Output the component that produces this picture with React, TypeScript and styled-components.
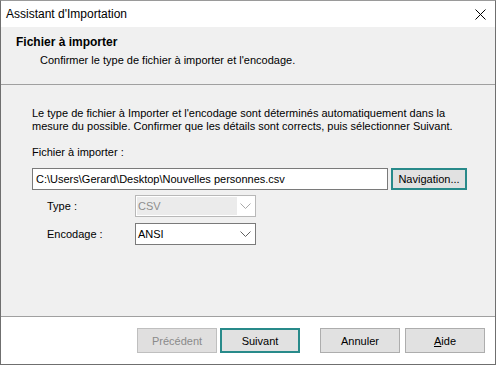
import styled, { createGlobalStyle } from "styled-components";

const GlobalStyle = createGlobalStyle`
  body {
    margin: 0;
    background: #ffffff;
    font-family: "Liberation Sans", Arial, sans-serif;
    font-size: 11px;
    color: #000000;
  }
`;

const Window = styled.div`
  width: 496px;
  height: 365px;
  box-sizing: border-box;
  border: 1px solid #6f6f6f;
  border-top-color: #9a9a9a;
  display: flex;
  flex-direction: column;
  background: #f0f0f0;
`;

const TitleBar = styled.div`
  height: 26px;
  flex: none;
  background: #ffffff;
  display: flex;
  align-items: center;
  justify-content: space-between;
  padding-left: 5px;
  padding-right: 9px;
  font-size: 12px;
`;

const Header = styled.div`
  height: 58px;
  flex: none;
  box-sizing: border-box;
  border-bottom: 1px solid #a0a0a0;
  padding: 8px 0 0 15px;
`;

const HeaderTitle = styled.div`
  font-weight: bold;
  font-size: 12px;
  line-height: 14px;
`;

const HeaderSub = styled.div`
  margin-top: 4px;
  padding-left: 24px;
  line-height: 14px;
`;

const Body = styled.div`
  flex: 1;
  padding: 22px 0 0 31px;
`;

const Text = styled.div`
  line-height: 13px;
  white-space: nowrap;
`;

const FieldLabel = styled(Text)<{ $top: number }>`
  margin-top: ${(p) => p.$top}px;
`;

const FileRow = styled.div`
  display: flex;
  gap: 3px;
  margin-top: 9px;
`;

const TextInput = styled.div`
  width: 356px;
  height: 22px;
  box-sizing: border-box;
  border: 1px solid #7a7a7a;
  background: #ffffff;
  display: flex;
  align-items: center;
  padding-left: 3px;
`;

const Button = styled.div<{ $focus?: boolean; $disabled?: boolean; $w?: number }>`
  width: ${(p) => p.$w ?? 80}px;
  height: ${(p) => (p.$w ? 22 : 25)}px;
  box-sizing: border-box;
  border: ${(p) => (p.$focus ? "2px solid #288a8a" : p.$disabled ? "1px solid #bfbfbf" : "1px solid #adadad")};
  background: ${(p) => (p.$disabled ? "#e0dfdf" : "#e1e1e1")};
  color: ${(p) => (p.$disabled ? "#8a8a8a" : "#000000")};
  display: flex;
  align-items: center;
  justify-content: center;
`;

const Grid = styled.div`
  display: grid;
  grid-template-columns: 88px 121px;
  row-gap: 6px;
  margin-top: 5px;
  padding-left: 15px;
  align-items: center;
`;

const Combo = styled.div<{ $disabled?: boolean }>`
  height: 22px;
  box-sizing: border-box;
  border: 1px solid ${(p) => (p.$disabled ? "#b8b8b8" : "#7a7a7a")};
  background: #ffffff;
  padding: 1px;
  display: flex;
  align-items: stretch;
  color: ${(p) => (p.$disabled ? "#8d8d8d" : "#000000")};
`;

const ComboValue = styled.div<{ $disabled?: boolean }>`
  flex: 1;
  background: ${(p) => (p.$disabled ? "#ebebeb" : "#ffffff")};
  display: flex;
  align-items: center;
  padding-left: 1px;
`;

const Chevron = styled.div`
  width: 17px;
  display: flex;
  align-items: center;
  justify-content: center;
`;

const Footer = styled.div`
  height: 48px;
  flex: none;
  box-sizing: border-box;
  border-top: 1px solid #a0a0a0;
  background: #ffffff;
  display: flex;
  justify-content: flex-end;
  align-items: flex-start;
  padding: 11px 10px 0 0;
`;

const Spacer = styled.div<{ $w: number }>`
  width: ${(p) => p.$w}px;
`;

const ChevronIcon = ({ color }: { color: string }) => (
  <svg width="11" height="6" viewBox="0 0 11 6">
    <path d="M0.5 0.5 L5.5 5.5 L10.5 0.5" fill="none" stroke={color} strokeWidth="1" />
  </svg>
);

export default function App() {
  return (
    <>
      <GlobalStyle />
      <Window>
        <TitleBar>
          <span>Assistant d'Importation</span>
          <svg width="11" height="11" viewBox="0 0 11 11">
            <path d="M0.5 0.5 L10.5 10.5 M10.5 0.5 L0.5 10.5" stroke="#000" strokeWidth="1" />
          </svg>
        </TitleBar>
        <Header>
          <HeaderTitle>Fichier à importer</HeaderTitle>
          <HeaderSub>Confirmer le type de fichier à importer et l'encodage.</HeaderSub>
        </Header>
        <Body>
          <Text>
            Le type de fichier à Importer et l'encodage sont déterminés automatiquement dans la
            <br />
            mesure du possible. Confirmer que les détails sont corrects, puis sélectionner Suivant.
          </Text>
          <FieldLabel $top={13}>Fichier à importer :</FieldLabel>
          <FileRow>
            <TextInput>C:\Users\Gerard\Desktop\Nouvelles personnes.csv</TextInput>
            <Button $focus $w={76}>Navigation...</Button>
          </FileRow>
          <Grid>
            <Text>Type :</Text>
            <Combo $disabled>
              <ComboValue $disabled>CSV</ComboValue>
              <Chevron>
                <ChevronIcon color="#a8a8a8" />
              </Chevron>
            </Combo>
            <Text>Encodage :</Text>
            <Combo>
              <ComboValue>ANSI</ComboValue>
              <Chevron>
                <ChevronIcon color="#606060" />
              </Chevron>
            </Combo>
          </Grid>
        </Body>
        <Footer>
          <Button $disabled>Précédent</Button>
          <Spacer $w={3} />
          <Button $focus>Suivant</Button>
          <Spacer $w={20} />
          <Button>Annuler</Button>
          <Spacer $w={5} />
          <Button>
            <span>
              <u>A</u>ide
            </span>
          </Button>
        </Footer>
      </Window>
    </>
  );
}
